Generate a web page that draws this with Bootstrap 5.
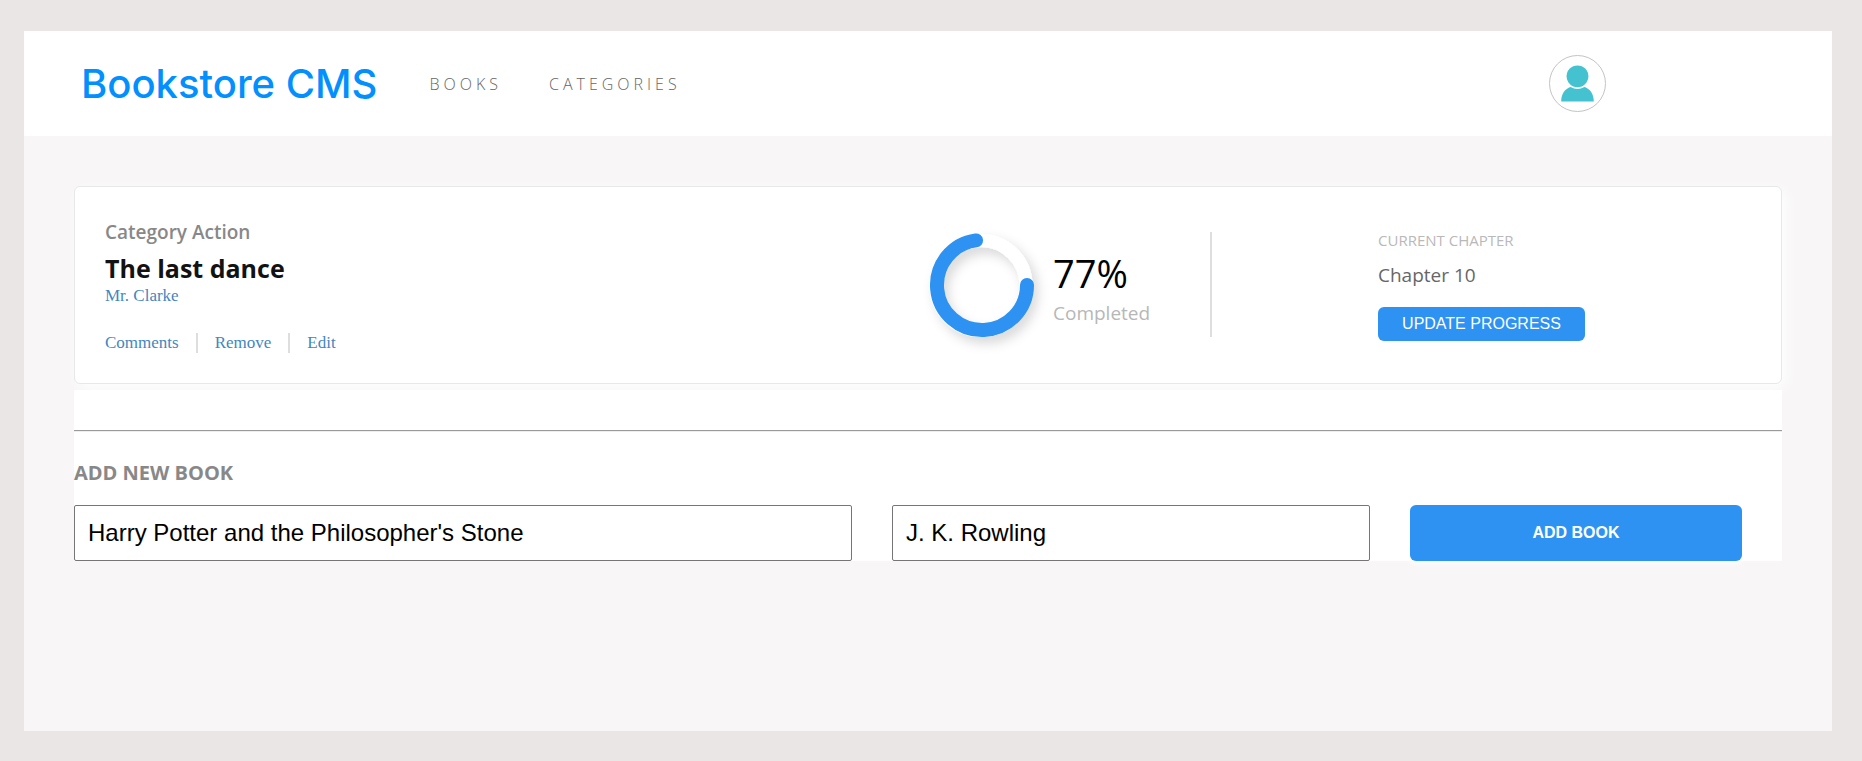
<!DOCTYPE html>
<html lang="en">
<head>
<meta charset="utf-8">
<meta name="viewport" content="width=device-width, initial-scale=1">
<title>Bookstore CMS</title>
<link rel="stylesheet" href="https://cdn.jsdelivr.net/npm/bootstrap@5.3.0/dist/css/bootstrap.min.css">
<style>
  :root { --azure: #2d92f1; --ink-link: #4386bf; --line: #dedede; }
  body { background: #eae6e5; padding: 31px 30px 30px 24px; font-family: "Open Sans", "Noto Sans", sans-serif; color: #121212; }
  a { text-decoration: none; }
  .panel { background: #f8f6f7; min-height: calc(100vh - 61px); }
  .topbar { height: 105px; padding: 0 12.5% 0 57px; }
  .brand { font: 500 40px/48px Inter, sans-serif; color: #0290ff; margin-right: 52px; }
  .menu { gap: 47px; }
  .menu a { font-size: 16px; line-height: 24px; font-weight: 300; letter-spacing: 4px; color: #666; }
  .avatar { width: 57px; height: 57px; border: 1px solid #c4c4c4; background: #fff; }
  .content-area { padding: 50px; }
  .book { display: grid; grid-template-columns: 855fr 448fr 403fr; height: 198px; margin-bottom: 6px; background: #fff; border: 1px solid #e8e8e8; border-radius: 6px; box-shadow: 4px 4px 14px #fff; }
  .book-info { padding: 31px 0 0 30px; }
  .genre { font-size: 19px; line-height: 28px; font-weight: 600; color: #888; margin: 0; }
  .book-title { font-size: 25px; line-height: 36px; font-weight: 700; margin: 4px 0 0; }
  .serif { font-family: "Liberation Serif", serif; font-size: 17px; line-height: 20px; color: var(--ink-link); }
  .actions { margin-top: 27px; }
  .actions li + li { margin-left: 17px; padding-left: 17px; border-left: 2px solid var(--line); }
  .progress-box { height: 105px; margin-top: 45px; border-right: 2px solid var(--line); width: 282px; }
  .ring { width: 104px; height: 104px; overflow: visible; flex: none; margin-right: 19px; }
  .figures { padding-top: 7px; }
  .percent { font-size: 38px; line-height: 46px; color: #000; margin-bottom: 3px; }
  .done { font-size: 19px; line-height: 28px; color: #b7b7b7; }
  .chapter { padding-top: 42px; }
  .caption { font-size: 15px; line-height: 22px; color: #b9b9b9; }
  .current { font-size: 19px; line-height: 28px; color: #666; margin: 10px 0 18px; }
  .action-btn { background: var(--azure); color: #fff; border: 0; border-radius: 6px; font-family: "Liberation Sans", sans-serif; font-size: 16px; line-height: 20px; }
  .update { width: 207px; height: 34px; }
  .add-area { background: #fff; padding-top: 40px; }
  .rule { border: 0; border-top: 1px solid #9a9a9a; border-bottom: 1px solid #eee; opacity: 1; margin: 0 0 27px; }
  .add-title { font-size: 20px; line-height: 28px; font-weight: 700; color: #888; margin: 0 0 18px; }
  .add-form { display: grid; grid-template-columns: 778fr 478fr 332fr; gap: 40px; padding-right: 40px; }
  .field { min-width: 0; height: 56px; padding: 0 13px; border: 1px solid #767676; border-radius: 2px; font-family: "Liberation Sans", sans-serif; font-size: 24px; color: #000; }
  .add-btn { font-weight: 700; box-shadow: 0 2px 6px #fff; }
</style>
<script src="https://cdn.jsdelivr.net/npm/bootstrap@5.3.0/dist/js/bootstrap.bundle.min.js"></script>
</head>
<body>
<div class="panel">
  <header class="topbar bg-white d-flex align-items-center">
    <a class="brand" href="#">Bookstore CMS</a>
    <nav class="menu d-flex me-auto">
      <a href="#books">BOOKS</a>
      <a href="#categories">CATEGORIES</a>
    </nav>
    <button class="avatar rounded-circle p-0" type="button" aria-label="Account">
      <svg class="d-block" width="55" height="55" viewBox="0 0 55 55" fill="#44c2d0" aria-hidden="true">
        <circle cx="27.500" cy="20.300" r="10.900"/>
        <path d="M11.200 45.500C11.200 38 15 32.700 20.600 31Q27.500 35 34.400 31C40 32.700 43.800 38 43.800 45.500Z"/>
      </svg>
    </button>
  </header>
  <main class="content-area">
    <article class="book">
      <div class="book-info">
        <p class="genre">Category Action</p>
        <h2 class="book-title">The last dance</h2>
        <a class="serif d-block" href="#author">Mr. Clarke</a>
        <ul class="actions list-unstyled d-flex mb-0">
          <li class="serif"><a class="serif" href="#comments">Comments</a></li>
          <li class="serif"><a class="serif" href="#remove">Remove</a></li>
          <li class="serif"><a class="serif" href="#edit">Edit</a></li>
        </ul>
      </div>
      <div class="progress-box d-flex align-items-center">
        <svg class="ring" viewBox="0 0 104 104" fill="none" role="img" aria-label="77% completed">
          <defs><filter id="soft" x="-30%" y="-30%" width="170%" height="170%"><feDropShadow dx="5" dy="6" stdDeviation="6" flood-color="#000" flood-opacity=".16"/></filter></defs>
          <circle cx="51" cy="52.500" r="45" stroke="#fff" stroke-width="13" filter="url(#soft)"/>
          <path d="M97 52A45 45 0 1 1 46 7.400" stroke="#2d92f1" stroke-width="14" stroke-linecap="round"/>
        </svg>
        <div class="figures">
          <div class="percent">77%</div>
          <div class="done">Completed</div>
        </div>
      </div>
      <div class="chapter">
        <div class="caption">CURRENT CHAPTER</div>
        <div class="current">Chapter 10</div>
        <button class="action-btn update" type="button">UPDATE PROGRESS</button>
      </div>
    </article>
    <section class="add-area">
      <hr class="rule">
      <h3 class="add-title">ADD NEW BOOK</h3>
      <form class="add-form">
        <input class="field" type="text" aria-label="Book title" value="Harry Potter and the Philosopher's Stone">
        <input class="field" type="text" aria-label="Author" value="J. K. Rowling">
        <button class="action-btn add-btn" type="button">ADD BOOK</button>
      </form>
    </section>
  </main>
</div>
</body>
</html>
